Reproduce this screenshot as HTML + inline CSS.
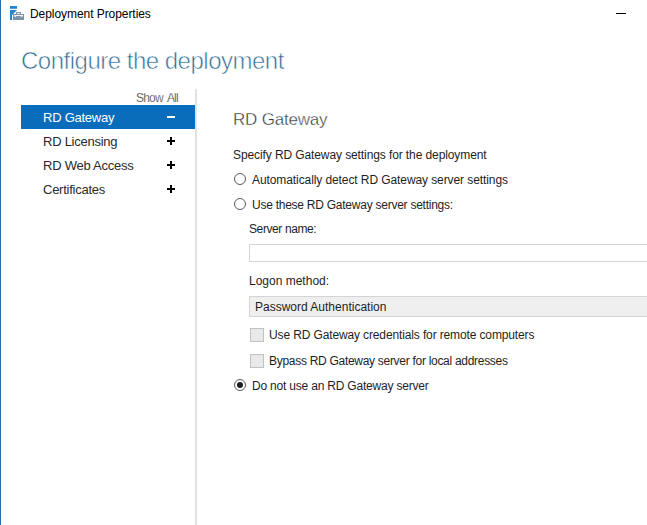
<!DOCTYPE html>
<html><head><meta charset="utf-8">
<style>
*{margin:0;padding:0;box-sizing:border-box}
html,body{width:647px;height:525px;overflow:hidden;background:#fff}
body{position:relative;font-family:"Liberation Sans",sans-serif;color:#1e1e1e}
.a{position:absolute;white-space:nowrap}
#lb{position:absolute;left:0;top:0;width:1px;height:525px;background:#2a6aa6}
#title{left:30px;top:7px;font-size:12px;color:#000;letter-spacing:-0.06px}
#min{position:absolute;left:616px;top:13px;width:10px;height:1px;background:#000}
#cfg{left:21px;top:47px;font-size:24px;color:#316d92;letter-spacing:-0.5px;-webkit-text-stroke:0.6px #fff}
#showall{left:136px;top:91px;font-size:12px;color:#2a2a2a;letter-spacing:-0.8px;word-spacing:2.2px;-webkit-text-stroke:0.25px #fff}
#div{position:absolute;left:195px;top:89px;width:2px;height:436px;background:#e2e2e2}
#sel{position:absolute;left:21px;top:105px;width:174px;height:24px;background:#0a6dbc}
.it{left:43px;font-size:13px;color:#2a2a2a;letter-spacing:-0.25px}
.pl{position:absolute;left:167px;width:8px;height:2px;background:#000}
.pv{position:absolute;left:170px;width:2px;height:8px;background:#000}
#h{left:233px;top:110px;font-size:17px;color:#363636;letter-spacing:-0.2px;-webkit-text-stroke:0.35px #fff}
.t{font-size:12px;color:#1e1e1e}
.rad{position:absolute;width:12px;height:12px;border:1px solid #5a5a5a;border-radius:50%;background:#fff}
.chk{position:absolute;width:14px;height:14px;border:1px solid #c2c2c2;background:#e9e9e9}
#inp{position:absolute;left:249px;top:244px;width:400px;height:18px;border:1px solid #d4d4d4;border-right:none;background:#fff}
#cmb{position:absolute;left:249px;top:296px;width:400px;height:21px;border:1px solid #d4d4d4;border-right:none;background:#efefef}
</style></head><body>
<div id="lb"></div>
<svg style="position:absolute;left:0;top:0" width="30" height="24" viewBox="0 0 30 24">
 <rect x="10" y="6" width="7" height="2.8" fill="#1f86d6"/>
 <polygon points="10,10 17,10 12,15 12,20 10,20" fill="#1f86d6"/>
 <rect x="13" y="14" width="11" height="6" fill="#7d93a8"/>
 <rect x="16" y="12" width="5" height="2" fill="#7d93a8"/>
 <rect x="17.3" y="13" width="2.5" height="1" fill="#fff"/>
 <rect x="14" y="15.1" width="9" height="0.9" fill="#fff"/>
 <polygon points="14,16 16.5,16 15.5,17" fill="#fff"/>
 <polygon points="20.5,16 23,16 21.5,17" fill="#fff"/>
</svg>
<div class="a" id="title">Deployment Properties</div>
<div id="min"></div>
<div class="a" id="cfg">Configure the deployment</div>
<div class="a" id="showall">Show All</div>
<div id="div"></div>
<div id="sel"></div>
<div class="a it" style="top:110px;color:#fff">RD Gateway</div>
<div class="pl" style="top:116px;background:#fff"></div>
<div class="a it" style="top:134px">RD Licensing</div>
<div class="pl" style="top:140px"></div><div class="pv" style="top:137px"></div>
<div class="a it" style="top:158px">RD Web Access</div>
<div class="pl" style="top:164px"></div><div class="pv" style="top:161px"></div>
<div class="a it" style="top:182px">Certificates</div>
<div class="pl" style="top:188px"></div><div class="pv" style="top:185px"></div>

<div class="a" id="h">RD Gateway</div>
<div class="a t" style="left:233px;top:148px;letter-spacing:-0.1px">Specify RD Gateway settings for the deployment</div>
<div class="rad" style="left:234px;top:173px"></div>
<div class="a t" style="left:252px;top:173px;letter-spacing:-0.09px">Automatically detect RD Gateway server settings</div>
<div class="rad" style="left:234px;top:198px"></div>
<div class="a t" style="left:252px;top:198px;letter-spacing:-0.25px">Use these RD Gateway server settings:</div>
<div class="a t" style="left:249px;top:222px;letter-spacing:-0.4px">Server name:</div>
<div id="inp"></div>
<div class="a t" style="left:249px;top:274px">Logon method:</div>
<div id="cmb"></div>
<div class="a t" style="left:255px;top:300px">Password Authentication</div>
<div class="chk" style="left:250px;top:328px"></div>
<div class="a t" style="left:269px;top:328px;letter-spacing:-0.13px">Use RD Gateway credentials for remote computers</div>
<div class="chk" style="left:250px;top:354px"></div>
<div class="a t" style="left:269px;top:354px;letter-spacing:-0.29px">Bypass RD Gateway server for local addresses</div>
<div class="rad" style="left:234px;top:379px"></div>
<div style="position:absolute;left:237px;top:382px;width:6px;height:6px;border-radius:50%;background:#1e1e1e"></div>
<div class="a t" style="left:252px;top:379px;letter-spacing:-0.2px">Do not use an RD Gateway server</div>
</body></html>
